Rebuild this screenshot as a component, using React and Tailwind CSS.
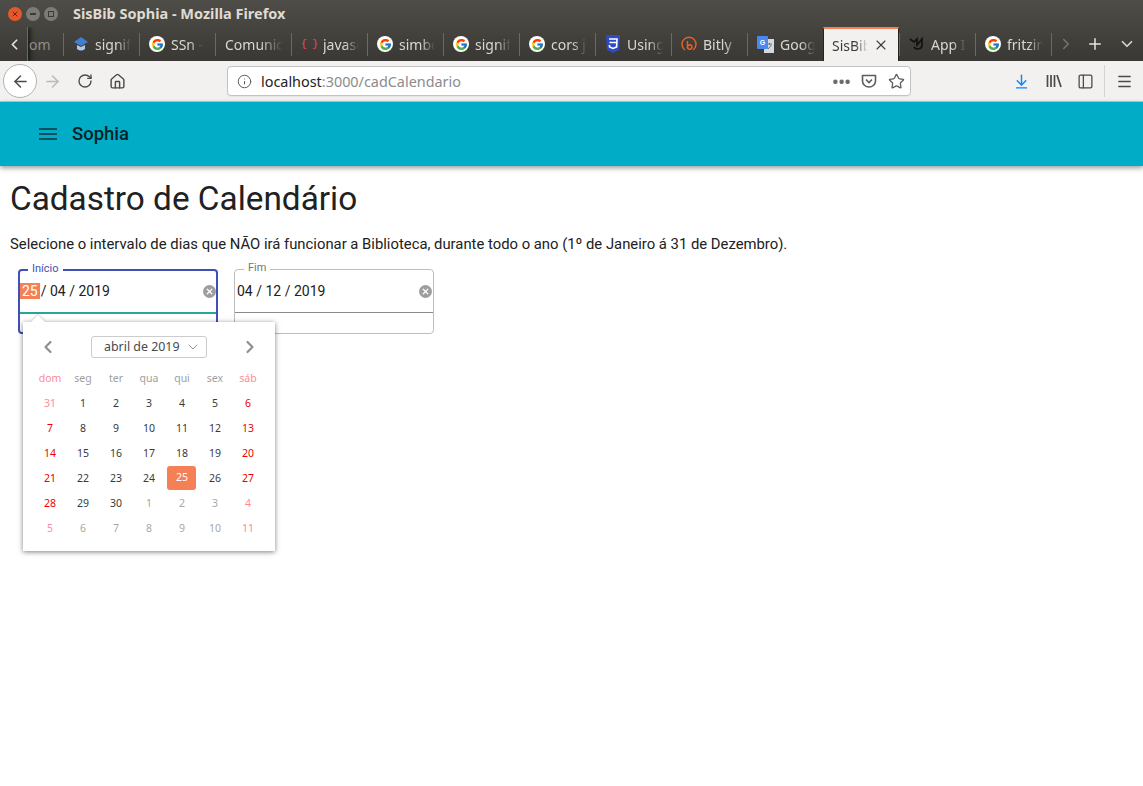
import React from 'react';
import { FcGoogle } from 'react-icons/fc';
import {
  ArrowLeft, ArrowRight, RotateCw, Home, Info, Star, ArrowDownToLine, Menu, X, Plus,
  ChevronLeft, ChevronRight, ChevronDown, PanelLeft
} from 'lucide-react';

const ui = "font-['Noto_Sans',sans-serif]";

const GoogleIcon = () => (
  <span className="flex h-4 w-4 shrink-0 items-center justify-center rounded-full bg-white">
    <FcGoogle size={13} />
  </span>
);

const BookIcon = () => (
  <svg width="16" height="16" viewBox="0 0 16 16" className="shrink-0">
    <path d="M8 1 L15 6 L8 10 L1 6 Z" fill="#3f7fd0" />
    <path d="M4 9 L8 11 L12 9 V13 Q8 16 4 13 Z" fill="#a9c9ee" />
  </svg>
);

const BracesIcon = () => (
  <span className="w-4 shrink-0 whitespace-nowrap text-center font-['Liberation_Mono',monospace] text-[10px] font-bold tracking-[-0.5px] text-[#c8444c]">{'{ }'}</span>
);

const CssIcon = () => (
  <svg width="16" height="18" viewBox="0 0 16 18" className="shrink-0">
    <path d="M1 0 H15 L14 15 L8 18 L2 15 Z" fill="#2f4bc4" />
    <path d="M4 4 H12 L11.6 12 L8 13.5 L4.6 12 L4.4 10 M4.5 7.5 H11.5" fill="none" stroke="#fff" strokeWidth="1.6" />
  </svg>
);

const BitlyIcon = () => (
  <svg width="16" height="16" viewBox="0 0 16 16" fill="none" stroke="#ee6123" strokeWidth="1.4" className="shrink-0">
    <path d="M4 14 A7 7 0 1 1 12 14" />
    <path d="M6.5 5 V12" />
    <circle cx="8.7" cy="11" r="2.2" />
  </svg>
);

const TranslateIcon = () => (
  <svg width="17" height="17" viewBox="0 0 17 17" className="shrink-0">
    <rect x="7" y="3" width="10" height="14" fill="#d5d9df" />
    <path d="M10 8 H15 M12.5 7 V9 M11 13 L14.5 9" stroke="#6a7280" strokeWidth="1" fill="none" />
    <rect x="0" y="0" width="11" height="13" rx="1" fill="#4a88ee" />
    <text x="5.5" y="9" textAnchor="middle" fontSize="7" fontWeight="700" fill="#fff" fontFamily="Liberation Sans">G</text>
  </svg>
);

const AppIcon = () => (
  <svg width="16" height="14" viewBox="0 0 16 14" fill="none" stroke="#111" strokeWidth="1.7" className="shrink-0">
    <path d="M1 2 L5 5 L8 2 V8 L13 2 V8 Q13 12 8 12 Q6 12 5 10" />
  </svg>
);

const abas = [
  { icone: <BookIcon />, texto: 'significado' },
  { icone: <GoogleIcon />, texto: 'SSn - ' },
  { icone: null, texto: 'Comunicação' },
  { icone: <BracesIcon />, texto: 'javascript' },
  { icone: <GoogleIcon />, texto: 'simbolo' },
  { icone: <GoogleIcon />, texto: 'significado' },
  { icone: <GoogleIcon />, texto: 'cors js' },
  { icone: <CssIcon />, texto: 'Using' },
  { icone: <BitlyIcon />, texto: 'Bitly |' },
  { icone: <TranslateIcon />, texto: 'Google' },
  { ativa: true, texto: 'SisBib' },
  { icone: <AppIcon />, texto: 'App I' },
  { icone: <GoogleIcon />, texto: 'fritzing' },
];

const Aba = ({ aba }) => {
  if (aba.ativa) {
    return (
      <div className="flex h-[34px] w-[76px] shrink-0 items-center border-t-2 border-x border-[#f58055] border-x-[#24231f] bg-[#f2f1ef] pl-2 text-[14px] text-[#3d3c38]">
        <span className="w-[36px] overflow-hidden whitespace-nowrap [mask-image:linear-gradient(to_right,black_65%,transparent)]">{aba.texto}</span>
        <X size={16} strokeWidth={1.6} className="ml-[5px] shrink-0 text-[#3d3c38]" />
      </div>
    );
  }
  return (
    <div className="flex h-[34px] w-[76px] shrink-0 items-center">
      <div className="h-[23px] w-px shrink-0 bg-[#6b6a65]" />
      <div className="flex min-w-0 flex-1 items-center gap-[6px] pl-[9px] pr-[8px] text-[14px] text-[#d9d8d3]">
        {aba.icone}
        <span className="overflow-hidden whitespace-nowrap [mask-image:linear-gradient(to_right,black_60%,transparent)]">{aba.texto}</span>
      </div>
    </div>
  );
};

const Pocket = () => (
  <svg width="16" height="16" viewBox="0 0 16 16" fill="none" stroke="#5c5c5f" strokeWidth="1.6">
    <path d="M1.5 2.5 H14.5 V8 A6.5 6 0 0 1 1.5 8 Z" strokeLinejoin="round" />
    <path d="M5 6.5 L8 9.5 L11 6.5" />
  </svg>
);

const Biblioteca = () => (
  <svg width="16" height="16" viewBox="0 0 16 16" fill="none" stroke="#4a4a4f" strokeWidth="1.7">
    <path d="M1.5 2 V14 M5 2 V14 M8.5 2 V14 M11 2 L15 14" />
  </svg>
);

const TitleBar = () => (
  <div className="flex h-[27px] items-center bg-gradient-to-b from-[#4f4d48] to-[#46443f] pl-[8px]">
    <div className="flex w-[65px] items-center gap-[4px]">
      <span className="flex h-[14px] w-[14px] items-center justify-center rounded-full bg-[#e8572a]">
        <X size={8} strokeWidth={3} className="text-[#5c2a15]" />
      </span>
      <span className="flex h-[14px] w-[14px] items-center justify-center rounded-full bg-[#7d7b75]">
        <span className="h-[2px] w-[6px] bg-[#3c3b37]" />
      </span>
      <span className="flex h-[14px] w-[14px] items-center justify-center rounded-full bg-[#7d7b75]">
        <span className="h-[6px] w-[6px] border border-[#3c3b37]" />
      </span>
    </div>
    <span className="text-[14.5px] font-bold text-[#dfdbd2]">SisBib Sophia - Mozilla Firefox</span>
  </div>
);

const TabBar = () => (
  <div className="flex h-[34px] items-center overflow-hidden bg-gradient-to-b from-[#46443f] to-[#393834]">
    <div className="flex h-full w-[28px] shrink-0 items-center border-r border-[#6b6a65] pl-[6px] shadow-[3px_0_4px_rgba(0,0,0,0.5)]">
      <ChevronLeft size={17} strokeWidth={2.4} className="text-[#e6e5e0]" />
    </div>
    <div className="w-[35px] shrink-0 overflow-hidden whitespace-nowrap pl-[1px] text-[14px] text-[#8f8e89]">om</div>
    {abas.map((aba, i) => <Aba key={i} aba={aba} />)}
    <div className="h-[23px] w-px shrink-0 bg-[#6b6a65]" />
    <ChevronRight size={18} strokeWidth={2} className="ml-[5px] shrink-0 text-[#77766f]" />
    <Plus size={18} strokeWidth={2} className="ml-[11px] shrink-0 text-[#e6e5e0]" />
    <ChevronDown size={18} strokeWidth={2.2} className="ml-[14px] shrink-0 text-[#d9d8d3]" />
  </div>
);

const NavBar = () => (
  <div className="flex h-[41px] items-center border-b border-[#c9c8c6] bg-[#f2f1ef] pl-[3px] pr-[11px]">
    <div className="flex h-[34px] w-[34px] shrink-0 items-center justify-center rounded-full border border-[#b3b3b3] bg-white">
      <ArrowLeft size={19} strokeWidth={1.9} className="text-[#4a4a4f]" />
    </div>
    <ArrowRight size={19} strokeWidth={1.9} className="ml-[6px] shrink-0 text-[#b9b9b9]" />
    <RotateCw size={16} strokeWidth={2} className="ml-[15px] shrink-0 text-[#4a4a4f]" />
    <Home size={17} strokeWidth={2} className="ml-[16px] shrink-0 text-[#4a4a4f]" />
    <div className="ml-[101px] flex h-[30px] w-[684px] shrink-0 items-center rounded-[4px] border border-[#c4c3c1] bg-white pl-[9px] pr-[5px] shadow-[0_1px_1px_rgba(0,0,0,0.05)]">
      <Info size={15} strokeWidth={1.6} className="shrink-0 text-[#5c5c5f]" />
      <span className="ml-[9px] flex-1 pt-px text-[14.4px] text-[#8b8b8e]"><span className="text-[#222]">localhost</span>:3000/cadCalendario</span>
      <span className="text-[15px] font-bold leading-none tracking-[0.5px] text-[#6b6b6e]">•••</span>
      <span className="ml-[10px]"><Pocket /></span>
      <Star size={17} strokeWidth={1.8} className="ml-[11px] text-[#5c5c5f]" />
    </div>
    <ArrowDownToLine size={17} strokeWidth={2} className="ml-[102px] shrink-0 text-[#0a84ff]" />
    <span className="ml-[16px]"><Biblioteca /></span>
    <PanelLeft size={17} strokeWidth={1.8} className="ml-[15px] shrink-0 text-[#4a4a4f]" />
    <div className="ml-[10px] h-[32px] w-px shrink-0 bg-[#d5d4d2]" />
    <Menu size={17} strokeWidth={2} className="ml-[11px] shrink-0 text-[#4a4a4f]" />
  </div>
);

const Campo = ({ rotulo, valor, ativo, children }) => (
  <div className={`relative h-[65px] w-[200px] rounded-[4px] ${ativo ? 'border-2 border-[#3f51b5]' : 'border border-[#bdbdbd]'}`}>
    <span className={`absolute top-[-9px] bg-white px-[4px] text-[11px] leading-[14px] ${ativo ? 'left-[8px] text-[#3f51b5]' : 'left-[9px] text-[#757575]'}`}>{rotulo}</span>
    <div className={`flex h-[43px] items-center text-[14px] text-[#212121] ${ativo ? 'border-b-2 border-[#26a69a] pl-0 pr-0' : 'border-b border-[#8a8a8a] pl-[2px] pr-px'}`}>
      <span className="flex-1 whitespace-nowrap">{children}{valor}</span>
      <span className="flex h-[13px] w-[13px] items-center justify-center rounded-full bg-[#9e9e9e]">
        <X size={9} strokeWidth={3.2} className="text-white" />
      </span>
    </div>
  </div>
);

const semana = ['dom', 'seg', 'ter', 'qua', 'qui', 'sex', 'sáb'];
const dias = [
  [31, 1, 2, 3, 4, 5, 6],
  [7, 8, 9, 10, 11, 12, 13],
  [14, 15, 16, 17, 18, 19, 20],
  [21, 22, 23, 24, 25, 26, 27],
  [28, 29, 30, 1, 2, 3, 4],
  [5, 6, 7, 8, 9, 10, 11],
];

const corDia = (dia, l, c) => {
  const fora = (l === 0 && dia === 31) || (l === 4 && c > 2) || l === 5;
  const fds = c === 0 || c === 6;
  if (fora) return fds ? 'text-[#ff8a9a]' : 'text-[#a8a8a8]';
  return fds ? 'text-[#f00000]' : 'text-[#3a3a3a]';
};

const Calendario = () => (
  <div className={`absolute left-[23px] top-[156px] h-[229px] w-[252px] bg-white shadow-[0_1px_5px_rgba(0,0,0,0.5)] ${ui}`}>
    <div className="absolute left-[10px] top-[-5px] h-[10px] w-[10px] rotate-45 bg-white shadow-[-1px_-1px_2px_rgba(0,0,0,0.15)]" />
    <div className="relative flex h-[48px] items-center justify-between pl-[15px] pr-[15px] pt-[2px]">
      <ChevronLeft size={20} strokeWidth={2.6} className="text-[#8f8f8f]" />
      <div className="flex h-[22px] w-[116px] items-center justify-between rounded-[3px] border border-[#cccccc] pl-[12px] pr-[5px] text-[12.4px] text-[#4a4a4a]">
        abril de 2019
        <ChevronDown size={16} strokeWidth={1.4} className="text-[#8f8f8f]" />
      </div>
      <ChevronRight size={20} strokeWidth={2.6} className="text-[#8f8f8f]" />
    </div>
    <div className="grid grid-cols-[repeat(7,33px)] justify-center">
      {semana.map((d, i) => (
        <div key={d} className={`flex h-[17px] items-center justify-center text-[10.5px] ${i === 0 || i === 6 ? 'text-[#ff8a9a]' : 'text-[#a0a0a0]'}`}>{d}</div>
      ))}
    </div>
    <div className="mt-[4px] grid grid-cols-[repeat(7,33px)] justify-center">
      {dias.flatMap((linha, l) => linha.map((dia, c) => (
        l === 3 && c === 4 ? (
          <div key={`${l}-${c}`} className="flex h-[25px] items-center justify-center">
            <span className="mb-px mr-[2px] flex h-[24px] w-[29px] items-center justify-center rounded-[3px] bg-[#f58055] pl-[2px] text-[10.5px] text-white">{dia}</span>
          </div>
        ) : (
          <div key={`${l}-${c}`} className={`flex h-[25px] items-center justify-center text-[10.5px] ${corDia(dia, l, c)}`}>{dia}</div>
        )
      )))}
    </div>
  </div>
);

export default function App() {
  return (
    <div className="min-h-[786px] w-[1143px] overflow-hidden bg-white">
      <div className={ui}>
        <TitleBar />
        <TabBar />
        <NavBar />
      </div>
      <header className="flex h-[64px] items-center bg-[#00acc6] pl-[39px] shadow-[0_2px_5px_rgba(0,0,0,0.4)]">
        <svg width="18" height="12" viewBox="0 0 18 12" stroke="#0d5060" strokeWidth="2" className="shrink-0">
          <path d="M0 1 H18 M0 6 H18 M0 11 H18" />
        </svg>
        <span className="ml-[15px] pt-px font-['Roboto',sans-serif] text-[18.5px] font-medium text-[#06222b]">Sophia</span>
      </header>
      <main className="relative px-[10px] font-['Roboto',sans-serif] text-[#212121]">
        <h1 className="pt-[14px] text-[33.35px] leading-[38px]">Cadastro de Calendário</h1>
        <p className="mt-[16px] text-[14.84px] leading-[20px]">Selecione o intervalo de dias que NÃO irá funcionar a Biblioteca, durante todo o ano (1º de Janeiro á 31 de Dezembro).</p>
        <div className="mt-[15px] flex gap-[16px] pl-[8px]">
          <Campo rotulo="Início" ativo valor="/ 04 / 2019">
            <span className="mr-px bg-[#f58055] px-[2px] text-white">25</span>
          </Campo>
          <Campo rotulo="Fim" valor="04 / 12 / 2019" />
        </div>
        <Calendario />
      </main>
    </div>
  );
}
